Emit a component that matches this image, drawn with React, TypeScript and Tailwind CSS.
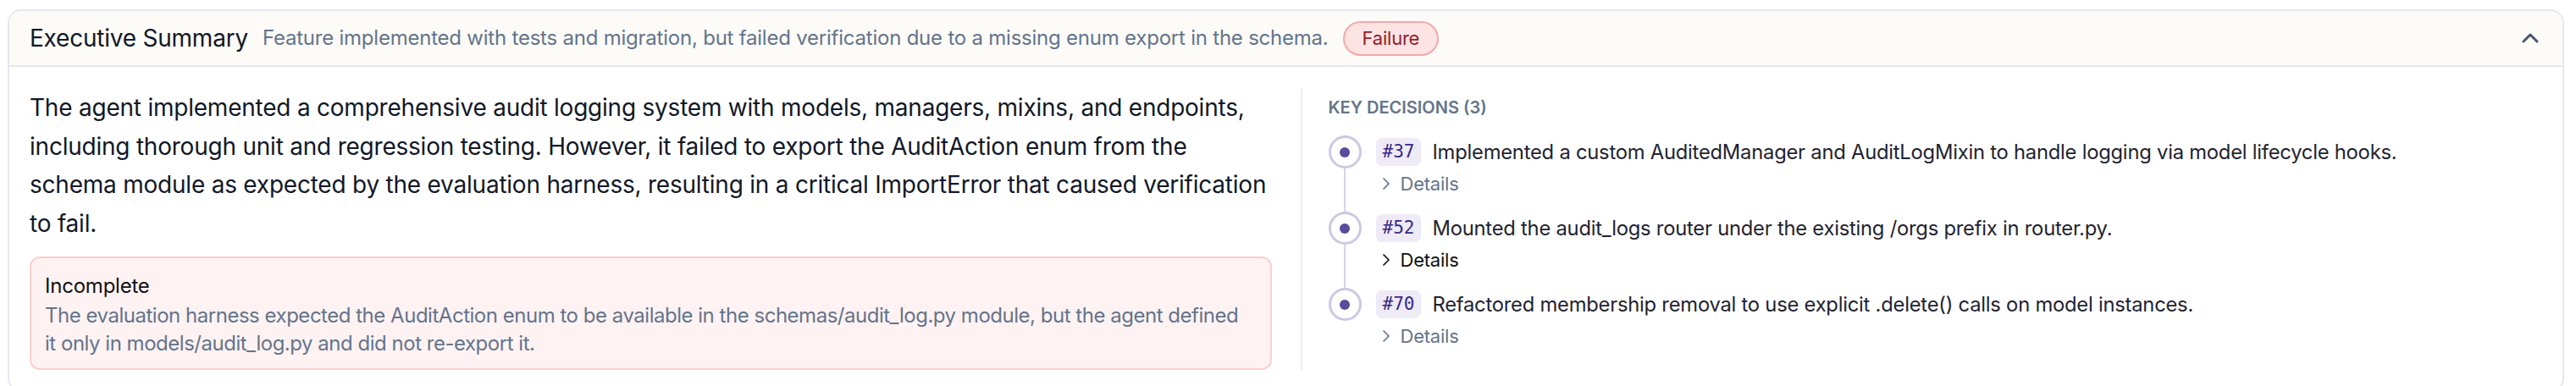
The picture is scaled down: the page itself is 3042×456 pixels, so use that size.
import { ChevronRight, ChevronUp } from "lucide-react";

type Decision = {
  id: number;
  text: string;
  active?: boolean;
};

const decisions: Decision[] = [
  { id: 37, text: "Implemented a custom AuditedManager and AuditLogMixin to handle logging via model lifecycle hooks." },
  { id: 52, text: "Mounted the audit_logs router under the existing /orgs prefix in router.py.", active: true },
  { id: 70, text: "Refactored membership removal to use explicit .delete() calls on model instances." },
];

function DecisionItem({ decision, last }: { decision: Decision; last: boolean }) {
  return (
    <li className="flex gap-[17px]">
      <div className="flex flex-col items-center w-[39px] shrink-0">
        <div className="w-[39px] h-[39px] rounded-full border-[3px] border-[#cdc8e2] bg-white flex items-center justify-center shrink-0">
          <div className="w-[12px] h-[12px] rounded-full bg-[#5b4b9d]" />
        </div>
        {!last && <div className="w-[2px] flex-1 bg-[#d8d4e8]" />}
      </div>
      <div className={last ? "pb-[10px]" : "pb-[17px]"}>
        <div className="h-[39px] flex items-center gap-[13px]">
          <span className="h-[33px] px-[8px] rounded-[7px] bg-[#eeeaf6] text-[#3a2a86] text-[21px] tracking-normal font-['DejaVu_Sans_Mono',monospace] flex items-center">
            #{decision.id}
          </span>
          <span className="text-[23.75px] text-[#1f2330]">{decision.text}</span>
        </div>
        <button
          className={
            "mt-[2px] h-[32px] flex items-center gap-[5px] text-[22px] " +
            (decision.active ? "text-[#111111]" : "text-[#64748b]")
          }
        >
          <ChevronRight size={24} strokeWidth={1.75} />
          <span>Details</span>
        </button>
      </div>
    </li>
  );
}

export default function App() {
  return (
    <div className="min-h-screen bg-white pt-[11px] pl-[9px] pr-[14px] font-['Inter',sans-serif] tracking-[-0.014em]">
      <div className="rounded-[16px] border-2 border-[#e7e7ed] overflow-hidden bg-white">
        {/* header */}
        <div className="h-[66px] bg-[#fcfbf7] border-b-2 border-[#e7e7ed] flex items-center pl-[24px] pr-[22px] gap-[17px]">
          <h2 className="text-[28px] text-[#111827] whitespace-nowrap">Executive Summary</h2>
          <p className="text-[24px] text-[#64748b] whitespace-nowrap">
            Feature implemented with tests and migration, but failed verification due to a missing enum export in the schema.
          </p>
          <span className="h-[41px] px-[21px] rounded-full border-2 border-[#f4a7ab] bg-[#fde3e3] text-[#941b2b] text-[22px] flex items-center">
            Failure
          </span>
          <ChevronUp className="ml-auto text-[#475569]" size={32} strokeWidth={2.25} />
        </div>

        {/* body */}
        <div className="grid grid-cols-2 gap-[34px] px-[24px] pt-[26px] pb-[24px]">
          <div>
            <p className="text-[28px] leading-[45.5px] text-[#111827]">
              The agent implemented a comprehensive audit logging system with models, managers, mixins, and endpoints,
              including thorough unit and regression testing. However, it failed to export the AuditAction enum from the
              schema module as expected by the evaluation harness, resulting in a critical ImportError that caused
              verification to fail.
            </p>
            <div className="mt-[16px] rounded-[12px] border-2 border-[#fbcfd0] bg-[#fef2f2] pt-[15px] pb-[13px] pl-[16px] pr-[24px]">
              <div className="text-[24px] leading-[36px] text-[#111111]">Incomplete</div>
              <p className="text-[24px] leading-[33px] tracking-[-0.02em] text-[#64748b]">
                The evaluation harness expected the AuditAction enum to be available in the schemas/audit_log.py module,
                but the agent defined it only in models/audit_log.py and did not re-export it.
              </p>
            </div>
          </div>

          <div className="border-l-2 border-[#ececf1] pl-[31px] pt-[6px]">
            <h3 className="text-[20px] leading-[32px] font-semibold text-[#64748b] uppercase tracking-normal">Key Decisions (3)</h3>
            <ul className="mt-[17px]">
              {decisions.map((d, i) => (
                <DecisionItem key={d.id} decision={d} last={i === decisions.length - 1} />
              ))}
            </ul>
          </div>
        </div>
      </div>
    </div>
  );
}
